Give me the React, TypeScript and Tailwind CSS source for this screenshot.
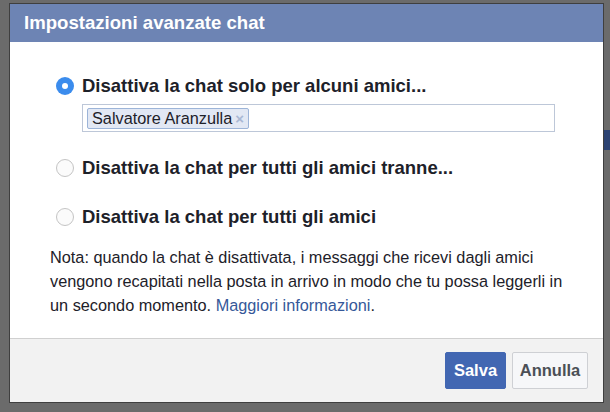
import React from "react";

function Radio({ checked }: { checked?: boolean }) {
  return checked ? (
    <span className="flex h-[18px] w-[18px] shrink-0 items-center justify-center rounded-full bg-[#3b8ced]">
      <span className="h-[6px] w-[6px] rounded-full bg-white" />
    </span>
  ) : (
    <span className="h-[18px] w-[18px] shrink-0 rounded-full border border-[#c4c4c4] bg-[#fbfbfb]" />
  );
}

export default function App() {
  return (
    <div
      className="relative h-[412px] w-[610px] overflow-hidden bg-[#6b6b6b]"
      style={{ fontFamily: '"Liberation Sans", Arial, sans-serif' }}
    >
      <div className="absolute right-0 top-[130px] h-[20px] w-[6px] bg-[#2d4373]" />
      <div className="ml-[9px] mt-[3px] flex h-[400px] w-[595px] flex-col border border-[#3f3f3f] bg-white">
        <div className="flex h-[38px] items-center bg-[#6d84b4] px-[14px]">
          <span className="text-[18.6px] font-bold text-white">Impostazioni avanzate chat</span>
        </div>
        <div className="flex flex-1 flex-col bg-white pl-[46px] pt-[33px]">
          <div className="flex items-center gap-[8px]">
            <Radio checked />
            <span className="text-[18.5px] font-bold leading-[22px] text-[#1d2129]">
              Disattiva la chat solo per alcuni amici...
            </span>
          </div>
          <div className="ml-[26px] mt-[7px] flex h-[28px] w-[473px] items-center border border-[#bdc7d8] bg-white px-[4px]">
            <span className="flex h-[21px] items-center gap-[3px] rounded-[2px] border border-[#9cb4d8] bg-[#e2e8f4] px-[4px] text-[16.3px] leading-[19px] text-[#1d2129]">
              Salvatore Aranzulla
              <span className="text-[15px] font-bold leading-[15px] text-[#a9b8d4]">×</span>
            </span>
          </div>
          <div className="mt-[25px] flex items-center gap-[8px]">
            <Radio />
            <span className="text-[18.5px] font-bold leading-[22px] text-[#1d2129]">
              Disattiva la chat per tutti gli amici tranne...
            </span>
          </div>
          <div className="mt-[27px] flex items-center gap-[8px]">
            <Radio />
            <span className="text-[18.5px] font-bold leading-[22px] text-[#1d2129]">
              Disattiva la chat per tutti gli amici
            </span>
          </div>
          <p className="-ml-[6px] mt-[17px] w-[515px] text-[16.3px] leading-[24px] text-[#1d2129]">
            Nota: quando la chat è disattivata, i messaggi che ricevi dagli amici vengono recapitati nella posta in arrivo in modo che tu possa leggerli in un secondo momento.{" "}
            <span className="text-[#365899]">Maggiori informazioni</span>.
          </p>
        </div>
        <div className="flex h-[64px] items-center justify-end gap-[6px] border-t border-[#d0d0d0] bg-[#f2f2f2] pr-[15px]">
          <button className="h-[37px] w-[61px] rounded-[2px] border border-[#4267b2] bg-[#4267b2] text-[16.5px] font-bold text-white">
            Salva
          </button>
          <button className="h-[37px] w-[76px] rounded-[2px] border border-[#ced0d4] bg-[#f6f7f9] text-[16.5px] font-bold text-[#4b4f56]">
            Annulla
          </button>
        </div>
      </div>
    </div>
  );
}
